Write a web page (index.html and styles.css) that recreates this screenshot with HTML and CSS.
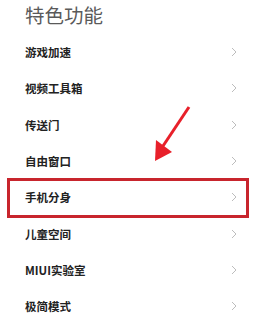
FILE: index.html
```html
<!DOCTYPE html>
<html lang="zh">
<head>
<meta charset="utf-8">
<link rel="stylesheet" href="styles.css">
</head>
<body>
<div class="page">
  <h1 class="title">特色功能</h1>
  <ul class="list">
    <li class="row"><span class="label">游戏加速</span><svg class="chev" width="6" height="10" viewBox="0 0 6 10"><polyline points="1,1 5,5 1,9"/></svg></li>
    <li class="row"><span class="label">视频工具箱</span><svg class="chev" width="6" height="10" viewBox="0 0 6 10"><polyline points="1,1 5,5 1,9"/></svg></li>
    <li class="row"><span class="label">传送门</span><svg class="chev" width="6" height="10" viewBox="0 0 6 10"><polyline points="1,1 5,5 1,9"/></svg></li>
    <li class="row"><span class="label">自由窗口</span><svg class="chev" width="6" height="10" viewBox="0 0 6 10"><polyline points="1,1 5,5 1,9"/></svg></li>
    <li class="row row-marked"><span class="label">手机分身</span><svg class="chev" width="6" height="10" viewBox="0 0 6 10"><polyline points="1,1 5,5 1,9"/></svg></li>
    <li class="row"><span class="label">儿童空间</span><svg class="chev" width="6" height="10" viewBox="0 0 6 10"><polyline points="1,1 5,5 1,9"/></svg></li>
    <li class="row"><span class="label">MIUI实验室</span><svg class="chev" width="6" height="10" viewBox="0 0 6 10"><polyline points="1,1 5,5 1,9"/></svg></li>
    <li class="row"><span class="label">极简模式</span><svg class="chev" width="6" height="10" viewBox="0 0 6 10"><polyline points="1,1 5,5 1,9"/></svg></li>
  </ul>
  <svg class="arrow" width="279" height="317" viewBox="0 0 279 317">
    <line x1="189" y1="107" x2="163" y2="146" />
    <polygon points="155,161 156,140 172,152" />
  </svg>
</div>
</body>
</html>
```
FILE: styles.css
```css
html, body {
  margin: 0;
  padding: 0;
  background: #ffffff;
}
.page {
  position: relative;
  width: 279px;
  height: 317px;
  overflow: hidden;
  font-family: "Noto Sans CJK SC", "Noto Sans", sans-serif;
}
.title {
  margin: 0;
  padding-left: 25px;
  height: 34px;
  line-height: 30px;
  font-size: 19.5px;
  font-weight: 400;
  color: #5a5a5a;
  letter-spacing: 0;
}
.list {
  list-style: none;
  margin: 0;
  padding: 0;
}
.row {
  position: relative;
  display: flex;
  align-items: center;
  justify-content: space-between;
  height: 36.3px;
  padding: 0 42px 0 25px;
}
.label {
  font-size: 11.5px;
  font-weight: 700;
  color: #222222;
}
.chev polyline {
  fill: none;
  stroke: #bdbdbd;
  stroke-width: 1;
}
.row-marked::after {
  content: "";
  position: absolute;
  left: 7px;
  width: 236px;
  top: -1.2px;
  bottom: -2.6px;
  border: 3px solid #c8252d;
}
.arrow {
  position: absolute;
  left: 0;
  top: 0;
}
.arrow line {
  stroke: #e8202a;
  stroke-width: 3;
}
.arrow polygon {
  fill: #e8202a;
}
```
